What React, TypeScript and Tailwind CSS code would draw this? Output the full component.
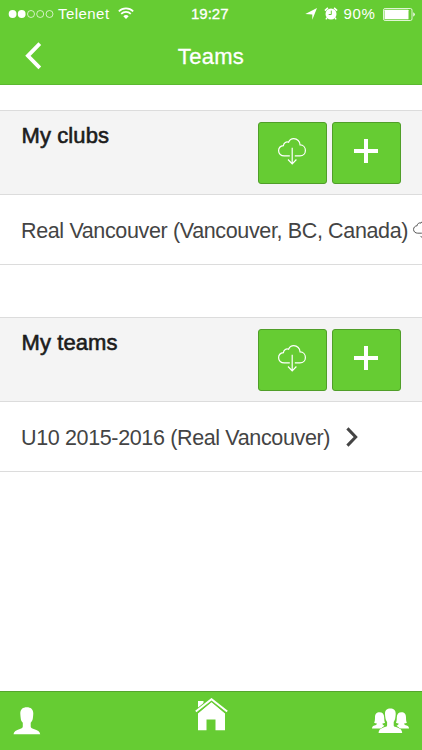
import type { ReactNode } from "react";

type ListSectionProps = {
  title: string;
  children: ReactNode;
};

function StatusBar() {
  return (
    <div className="relative flex h-7 items-center justify-between pl-2 pr-[7px] text-[15px] leading-7">
      <div className="flex items-center">
        <svg width="47" height="10" viewBox="0 0 47 10" fill="none">
          <circle cx="4.6" cy="5" r="3.9" fill="#fff" />
          <circle cx="13.7" cy="5" r="3.9" fill="#fff" />
          <circle cx="23" cy="5" r="3.5" stroke="#fff" strokeWidth="0.7" />
          <circle cx="32.2" cy="5" r="3.5" stroke="#fff" strokeWidth="0.7" />
          <circle cx="41.5" cy="5" r="3.5" stroke="#fff" strokeWidth="0.7" />
        </svg>
        <span className="ml-[3px] w-[59.5px] tracking-[0.45px]">Telenet</span>
        <svg width="16" height="12" viewBox="0 0 16 12" fill="none" className="-mt-0.5">
          <path d="M0.8 4.3a10.3 10.3 0 0 1 14.4 0" stroke="#fff" strokeWidth="1.7" />
          <path d="M3.2 6.9a6.8 6.8 0 0 1 9.6 0" stroke="#fff" strokeWidth="1.7" />
          <path d="M8 12 5.3 9.3a3.8 3.8 0 0 1 5.4 0z" fill="#fff" />
        </svg>
      </div>

      <span className="absolute left-[191px] [-webkit-text-stroke:0.3px]">
        19:27
      </span>

      <div className="flex items-center">
        <svg width="12" height="12" viewBox="0 0 12 12" fill="#fff" className="-mt-px">
          <path d="M12 0 7.3 11.800V6.500L0.300 6z" />
        </svg>
        <svg width="14" height="13" viewBox="0 0 14 13" className="-mt-0.5 ml-[7px]">
          <circle cx="7" cy="7" r="5.500" fill="#fff" />
          <path d="M0.9 3.600 3.900 0.900M10.100 0.900l3 2.700" stroke="#fff" strokeWidth="1.600" />
          <path d="M3 10.700 1.900 12.300M11 10.700l1.100 1.600" stroke="#fff" strokeWidth="1.300" />
          <path d="M7.300 3.600v3.900H4.700" stroke="#66cc33" fill="none" />
        </svg>
        <span className="ml-[6px] w-[39.5px] tracking-[0.7px]">90%</span>
        <svg width="32" height="13" viewBox="0 0 32 13" fill="none">
          <rect x="0.5" y="0.5" width="28.5" height="12" rx="1.6" stroke="#fff" strokeWidth="0.8" />
          <rect x="1.5" y="1.7" width="24" height="9.6" rx="0.6" fill="#fff" />
          <path d="M30.3 4.3q3 2.2 0 4.4z" fill="#fff" />
        </svg>
      </div>
    </div>
  );
}

function CloudIcon({ className }: { className?: string }) {
  return (
    <svg
      width="28"
      height="27"
      viewBox="0 0 28 27"
      fill="none"
      stroke="currentColor"
      strokeWidth="1.2"
      className={className}
    >
      <path d="M11.800 17.800H6.200C3 17.800 0.600 15.800 0.600 12.800c0-2.800 1.700-4.700 4.800-5.100C5.600 4.600 8.500 3.200 10.600 4.200 11.500 2 13.300 0.700 15.700 0.700c3.600 0 6.300 2.600 6.400 6.200 3.200 0.100 5.300 2.500 5.300 5.500 0 3.100-2.300 5.400-5.400 5.400h-5.200" />
      <path d="M14.200 9.700v16M10 21.500l4.200 4.400 4.200-4.400" />
    </svg>
  );
}

function ActionButton({ label, children }: { label: string; children: ReactNode }) {
  return (
    <button
      aria-label={label}
      className="flex h-[62px] w-[68.5px] justify-center rounded-[3px] border border-[#509e29] bg-[#66cc33] text-white"
    >
      {children}
    </button>
  );
}

function ListSection({ title, children }: ListSectionProps) {
  return (
    <section>
      <div className="flex h-[85px] justify-between border-y border-[#dcdcdc] bg-[#f4f4f4] pl-[21.5px] pr-[21.5px] pt-[11px]">
        <h2 className="text-[22px] leading-7 tracking-[0.1px] text-[#1c1c1c] [-webkit-text-stroke:0.6px]">
          {title}
        </h2>

        <div className="flex gap-[5.5px]">
          <ActionButton label="Download">
            <CloudIcon className="mt-[15px]" />
          </ActionButton>
          <ActionButton label="Add">
            <svg width="24" height="24" viewBox="0 0 24 24" className="mt-4">
              <path d="M12 0v24M0 12h24" stroke="#fff" strokeWidth="4" />
            </svg>
          </ActionButton>
        </div>
      </div>

      <div className="flex h-[70px] items-center overflow-hidden whitespace-nowrap border-b border-[#dcdcdc] pl-[21px] pt-[3px] text-[21.5px] tracking-[-0.36px] text-[#444]">
        {children}
      </div>
    </section>
  );
}

// one of the two smaller people beside the middle figure
const sidePerson =
  "M3 9.500C3 5.800 4.600 4.300 7.500 4.300S12.200 6 12.200 9.500c0 2.200.200 3.800.9 5.300-.8.5-1.700.7-2.700.8 0 1.300 1 1.700 2 2.100L9 20.500H0c0-2.300 1.700-2.900 4-3.500.6-.3.9-.7.9-1.400-1-.1-2-.3-2.800-.8C2.800 13.300 3 11.700 3 9.500z";

export default function App() {
  return (
    <main className="flex h-[750px] w-[422px] flex-col overflow-hidden bg-white font-['Liberation_Sans',sans-serif]">
      <header className="h-[85px] border-b border-[#5bb830] bg-[#66cc33] text-white">
        <StatusBar />
        <div className="relative flex h-14 items-center justify-center">
          <svg width="18" height="28" viewBox="0 0 18 28" fill="none" className="absolute left-[25px] top-[14px]">
            <path d="M14.800 1.700 2.900 13.800l11.900 12.100" stroke="#fff" strokeWidth="3.8" />
          </svg>
          <h1 className="text-[22px] tracking-[0.3px] [-webkit-text-stroke:0.3px]">
            Teams
          </h1>
        </div>
      </header>

      <div className="flex flex-1 flex-col gap-[52px] pt-[25px]">
        <ListSection title="My clubs">
          <span>Real Vancouver (Vancouver, BC, Canada)</span>
          <CloudIcon className="-mt-0.5 ml-[5px] h-[20px] w-[21px] shrink-0" />
        </ListSection>

        <ListSection title="My teams">
          <span>U10 2015-2016 (Real Vancouver)</span>
          <svg width="12" height="20" viewBox="0 0 12 20" fill="none" className="-mt-[3px] ml-4">
            <path d="m1.4 1.4 8.3 8.6-8.3 8.6" stroke="#444" strokeWidth="3" />
          </svg>
        </ListSection>
      </div>

      <footer className="grid h-[59px] grid-cols-[1fr_auto_1fr] items-start border-t border-[#55a52d] bg-[#66cc33] px-[13px] text-white">
        <svg width="28" height="28" viewBox="0 0 28 28" fill="currentColor" className="mt-[15px]">
          <path d="M7.300 6.500C7.300 2.300 9.800 0.300 13.800 0.300s6.500 2 6.500 6.200c0 1.500-.3 3-.4 4.500-.2 2-1.100 3.500-2.200 4.800v3.800c0 1.200 1 1.700 3 2.400 4 1.300 6.200 2.500 6.500 5.200H0.500c.3-2.700 2.600-3.900 6.300-5.200 2-.7 3-1.200 3-2.400v-3.800C8.600 14.500 7.800 13 7.700 11c-.1-1.500-.4-3-.4-4.500z" />
        </svg>

        <svg width="33" height="33" viewBox="0 0 33 33" className="mt-[6px]">
          <path d="M3 3h5.500V9L3 13.500zM3 15.200 16.500 3.800 30 15.200V32.300H20.500V21.500H11.500V32.300H3z" fill="#fff" />
          <path d="M0.800 14.200 16.500 1.400 32.200 14.200" stroke="#66cc33" strokeWidth="4.400" fill="none" />
          <path d="M0.800 13.500 16.500 1.200 32.200 13.500" stroke="#fff" strokeWidth="2" fill="none" />
        </svg>

        <svg width="37" height="26" viewBox="0 0 37 26" fill="currentColor" className="mt-[15.5px] justify-self-end">
          <path d={sidePerson} />
          <path transform="translate(37 0) scale(-1 1)" d={sidePerson} />
          <path
            d="M13 5.800C13 2 15 0.500 18.300 0.500S23.700 2 23.700 5.800c0 1.300-.2 2.600-.4 4-.2 1.700-.8 3-1.600 4.200v3.200c0 1 .7 1.400 2.300 1.900 3.600 1.200 6 2.400 6.200 5.900H6.600c.2-3.500 2.600-4.700 6.200-5.900 1.600-.5 2.300-.9 2.300-1.900V14c-.9-1.200-1.500-2.500-1.700-4.200-.2-1.400-.4-2.700-.4-4z"
            stroke="#66cc33"
            strokeWidth="0.800"
            paintOrder="stroke"
          />
        </svg>
      </footer>
    </main>
  );
}
